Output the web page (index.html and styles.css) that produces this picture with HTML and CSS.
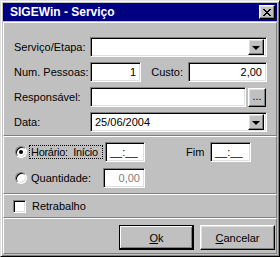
FILE: index.html
```html
<!DOCTYPE html>
<html lang="pt">
<head>
<meta charset="UTF-8" />
<title>SIGEWin - Serviço</title>
<link rel="stylesheet" href="styles.css">
</head>
<body>
<div class="window">
  <div class="titlebar">
    <span class="title">SIGEWin - Serviço</span>
    <button class="btn close-btn" aria-label="Fechar">
      <svg width="8" height="7" viewBox="0 0 8 7"><path d="M0 0h2v1h-2zM6 0h2v1h-2zM1 1h2v1h-2zM5 1h2v1h-2zM2 2h4v1h-4zM3 3h2v1h-2zM2 4h4v1h-4zM1 5h2v1h-2zM5 5h2v1h-2zM0 6h2v1h-2zM6 6h2v1h-2z" fill="#000"/></svg>
    </button>
  </div>

  <div class="panel panel-fields">
    <div class="row">
      <label class="lbl">Serviço/Etapa:</label>
      <div class="field combo"><span class="val"></span><span class="btn drop"><i class="tri"></i></span></div>
    </div>
    <div class="row">
      <label class="lbl">Num. Pessoas:</label>
      <div class="field num pessoas">1</div>
      <label class="lbl-custo">Custo:</label>
      <div class="field num custo">2,00</div>
    </div>
    <div class="row">
      <label class="lbl">Responsável:</label>
      <div class="field resp"></div>
      <button class="btn dots">...</button>
    </div>
    <div class="row">
      <label class="lbl">Data:</label>
      <div class="field combo"><span class="val">25/06/2004</span><span class="btn drop"><i class="tri"></i></span></div>
    </div>
  </div>

  <div class="panel panel-opts">
    <div class="opt-row">
      <span class="radio checked"></span>
      <span class="opt-text focus">Horário:&nbsp; Início</span>
      <div class="field time">__:__</div>
      <span class="fim">Fim</span>
      <div class="field time">__:__</div>
    </div>
    <div class="opt-row">
      <span class="radio"></span>
      <span class="opt-text">Quantidade:</span>
      <div class="field num qtd disabled">0,00</div>
    </div>
  </div>

  <div class="panel panel-check">
    <span class="checkbox"></span>
    <span class="check-text">Retrabalho</span>
  </div>

  <div class="panel panel-buttons">
    <button class="btn action default"><u>O</u>k</button>
    <button class="btn action"><u>C</u>ancelar</button>
  </div>
</div>
</body>
</html>
```

FILE: styles.css
```css
* {
  margin: 0; padding: 0; box-sizing: border-box;
}
body {
  background: #c0c0c0;
  font-family: "Liberation Sans", Arial, sans-serif;
  font-size: 11px;
  color: #000;
}
.window {
  width: 280px;
  height: 257px;
  background: #c0c0c0;
  border: 1px solid;
  border-color: #dfdfdf #000 #000 #dfdfdf;
  box-shadow: inset 1px 1px #fff, inset -1px -1px #808080;
  padding: 2px;
  display: flex;
  flex-direction: column;
}
.titlebar {
  height: 18px;
  flex: none;
  background: #000080;
  display: flex;
  align-items: center;
  justify-content: space-between;
  padding: 0 2px 0 7px;
}
.title {
  color: #fff;
  font-weight: bold;
  font-size: 12px;
}
.btn {
  background: #c0c0c0;
  border: 1px solid;
  border-color: #fff #000 #000 #fff;
  box-shadow: inset -1px -1px #808080, inset 1px 1px #dfdfdf;
  font-family: inherit;
  font-size: 11px;
  color: #000;
}
.close-btn {
  width: 16px;
  height: 14px;
  display: flex;
  align-items: center;
  justify-content: center;
}
.panel {
  border: 1px solid;
  border-color: #fff #808080 #808080 #fff;
  flex: none;
}
.panel-fields {
  margin-top: 1px;
  height: 114px;
  padding: 14px 8px 0 10px;
  display: flex;
  flex-direction: column;
  gap: 5px;
}
.row {
  display: flex;
  align-items: center;
  height: 20px;
}
.row > * { flex: none; }
.lbl {
  width: 76px;
}
.field {
  height: 20px;
  background: #fff;
  border: 1px solid;
  border-color: #808080 #fff #fff #808080;
  box-shadow: inset 1px 1px #000, inset -1px -1px #dfdfdf;
  padding: 0 4px;
  display: flex;
  align-items: center;
  flex: none;
}
.combo {
  width: 177px;
  padding: 2px 2px 2px 4px;
  justify-content: space-between;
}
.drop {
  width: 16px;
  height: 16px;
  display: flex;
  align-items: center;
  justify-content: center;
}
.tri {
  width: 0;
  height: 0;
  border-left: 4px solid transparent;
  border-right: 4px solid transparent;
  border-top: 4px solid #000;
  margin-top: 1px;
}
.num {
  justify-content: flex-end;
}
.pessoas { width: 51px; }
.lbl-custo {
  width: 42px;
  text-align: right;
  margin-right: 5px;
}
.custo { width: 79px; }
.resp { width: 156px; }
.dots {
  width: 18px;
  height: 19px;
  margin-left: 2px;
  line-height: 10px;
  padding-bottom: 2px;
}
.panel-opts {
  height: 58px;
  padding: 5px 0 0 11px;
  display: flex;
  flex-direction: column;
  gap: 6px;
}
.opt-row {
  display: flex;
  align-items: center;
  height: 20px;
}
.opt-row > * { flex: none; }
.radio {
  width: 12px;
  height: 12px;
  border-radius: 50%;
  background: #fff;
  border: 1px solid;
  border-color: #808080 #fff #fff #808080;
  box-shadow: inset 1px 1px #000, inset -1px -1px #dfdfdf;
  position: relative;
}
.radio.checked::after {
  content: "";
  position: absolute;
  left: 3px;
  top: 3px;
  width: 4px;
  height: 4px;
  border-radius: 50%;
  background: #000;
}
.opt-text {
  margin-left: 2px;
  padding: 0 1px;
  width: 74px;
  border: 1px dotted transparent;
  white-space: nowrap;
}
.opt-text.focus {
  border-color: #000;
  letter-spacing: -0.3px;
}
.time {
  width: 40px;
  margin-left: 2px;
}
.fim {
  margin-left: 41px;
  width: 24px;
}
.fim + .time { margin-left: 0; width: 41px; }
.qtd {
  width: 42px;
  margin-left: 0;
}
.disabled { color: #808080; }
.panel-check {
  height: 24px;
  padding: 5px 0 0 9px;
  display: flex;
  align-items: flex-start;
}
.checkbox {
  width: 13px;
  height: 13px;
  background: #fff;
  border: 1px solid;
  border-color: #808080 #fff #fff #808080;
  box-shadow: inset 1px 1px #000, inset -1px -1px #dfdfdf;
}
.check-text {
  margin-left: 6px;
  line-height: 13px;
}
.panel-buttons {
  flex: 1;
  display: flex;
  justify-content: flex-end;
  align-items: flex-start;
  gap: 6px;
  padding: 6px 1px 0 0;
}
.action {
  width: 75px;
  height: 25px;
}
.action.default {
  border-color: #000;
  box-shadow: inset -1px -1px #000, inset 1px 1px #fff, inset -2px -2px #808080;
}
```
